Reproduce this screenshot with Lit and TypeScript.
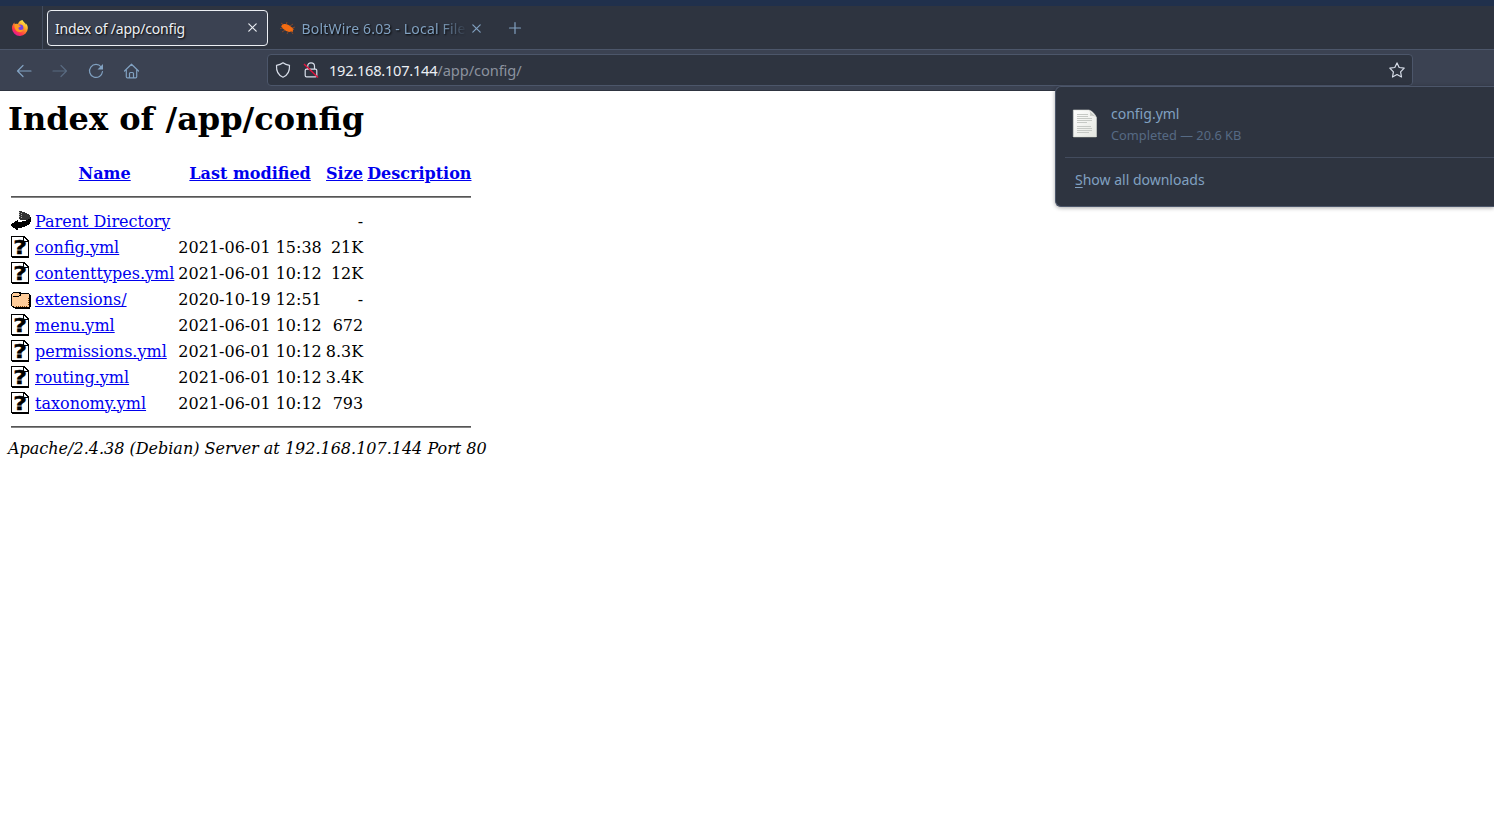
import { LitElement, html, css, svg, nothing } from "lit";
import { customElement } from "lit/decorators.js";

type Kind = "back" | "unknown" | "folder";
interface Entry { kind: Kind; name: string; date: string; size: string; }

const entries: Entry[] = [
  { kind: "back", name: "Parent Directory", date: "", size: "-" },
  { kind: "unknown", name: "config.yml", date: "2021-06-01 15:38", size: "21K" },
  { kind: "unknown", name: "contenttypes.yml", date: "2021-06-01 10:12", size: "12K" },
  { kind: "folder", name: "extensions/", date: "2020-10-19 12:51", size: "-" },
  { kind: "unknown", name: "menu.yml", date: "2021-06-01 10:12", size: "672" },
  { kind: "unknown", name: "permissions.yml", date: "2021-06-01 10:12", size: "8.3K" },
  { kind: "unknown", name: "routing.yml", date: "2021-06-01 10:12", size: "3.4K" },
  { kind: "unknown", name: "taxonomy.yml", date: "2021-06-01 10:12", size: "793" },
];

const art = {
  back: svg`
    <path fill="#333" d="M8 1h3v1h3v1h2v1h2v1h1v2h1v2h-2v1H9V9H8z"/>
    <path fill="#aaa" d="M8 2h1v1H8zM8 4h1v1H8zM8 6h1v1H8zM10 3h1v1h-1zM10 5h1v1h-1zM10 7h1v1h-1z"/>
    <path fill="#000" d="M0 14h1v-1h2v-1h1v-1h2v-1h1v2h4v-1h4v-1h2V9h2V7h1v5h-1v2h-1v1h-2v1h-2v1h-3v1H7v2H5v-1H4v-1H2v-1H1v-1H0z"/>`,
  unknown: svg`
    <path fill="#000" d="M0 0h13l5 5v17H1v-1H0z"/>
    <path fill="#fff" d="M1 1h11v5h5v14H1z"/>
    <path fill="#fff" d="M13 2l3 3h-3z"/>
    <text class="mark" x="0" y="0" transform="translate(2.200 17.500) scale(1.250 1)">?</text>`,
  folder: svg`
    <path fill="#000" d="M2 4h7l1 1h8l1 2h1v12h-1v2H4l-1-1H2l-2-2V6z"/>
    <path fill="#ffcc99" d="M2 5h6v1H2zM10 6h8v2h-8zM1 8h17v10l-1 1H3l-1-1H1zM1 6h8v2H1z"/>
    <path fill="#000" d="M2 8h6v1H2zM8 7h1v1H8zM9 6h1v1H9z"/>
    <path fill="none" stroke="#804000" stroke-dasharray="1 1" d="M5 18.500h11M17.500 17V9"/>`,
};

const icon = (k: Kind | null) =>
  html`<svg class="file" width="20" height="22" viewBox="0 0 20 22" shape-rendering="crispEdges">${k ? art[k] : nothing}</svg>`;

@customElement("browser-toolbar")
export class BrowserToolbar extends LitElement {
  static styles = css`
    :host { display: block; font-family: "Noto Sans", sans-serif; font-size: 14px; color: #81a1c1; }
    svg { display: block; flex: none; overflow: visible; }
    .line { fill: none; stroke: currentColor; stroke-linecap: round; stroke-linejoin: round; stroke-width: 1.2; }
    .strip { height: 6px; background: #20304c; }
    .tabs { height: 43px; display: flex; align-items: center; background: #2e3440; border-bottom: 1px solid #4c566a; }
    .brand { height: 43px; box-sizing: border-box; padding-left: 11px; border-right: 1px solid #434c5e; display: flex; align-items: center; width: 43px; }
    .tab { box-sizing: border-box; height: 36px; display: flex; align-items: center; text-shadow: 1px 1px 2px #000; }
    .active { margin-left: 4px; width: 221px; padding: 0 10.500px 0 7px; border: 1px solid #eceff4; border-radius: 4px; background: #3b4252; color: #eceff4; justify-content: space-between; }
    .second { width: 225px; padding: 1px 11px 0 12px; }
    .title { white-space: nowrap; padding-top: 2px; letter-spacing: -.2px; }
    .fade { width: 168px; margin-left: 5.500px; margin-right: 2.500px; padding-top: 1px; letter-spacing: .18px; overflow: hidden; line-height: 30px; -webkit-mask-image: linear-gradient(90deg, #000 82%, transparent 98%); mask-image: linear-gradient(90deg, #000 82%, transparent 98%); }
    .plus { margin: 1px 0 0 16px; }
    .nav { height: 41px; box-sizing: border-box; background: #3b4252; border-bottom: 1px solid #2e3440; display: flex; align-items: flex-start; padding: 4px 0 0 16px; }
    .buttons { display: flex; gap: 20px; align-items: center; height: 33px; width: 251px; }
    .disabled { opacity: .42; }
    .address { box-sizing: border-box; width: 1146px; height: 32px; border: 1px solid #4c566a; border-radius: 4px; background: #2e3440; color: #d8dee9; display: flex; align-items: center; padding: 0 7px; }
    .lock { margin-left: 12px; }
    .url { margin-left: 10px; flex: 1; font-size: 14.67px; letter-spacing: -.27px; color: #eceff4; white-space: nowrap; }
    .path { color: #8b929e; letter-spacing: -.1px; }
  `;
  render() {
    return html`
      <div class="strip"></div>
      <div class="tabs">
        <div class="brand">
          <svg width="18" height="18" viewBox="0 0 18 18">
            <defs>
              <linearGradient id="flame" x1=".85" y1=".1" x2=".25" y2=".95"><stop offset="0" stop-color="#fff04a"/><stop offset=".4" stop-color="#ff9a22"/><stop offset=".75" stop-color="#ff3b47"/><stop offset="1" stop-color="#e4159a"/></linearGradient>
            </defs>
            <path fill="url(#flame)" d="M11.500 1c.3 1.300 1.500 2 2.300 2.900.7.700 1.200 1.500 1.300 2.300 0-.7 0-1.300-.3-2 1.500 1.500 2.200 3.500 2 5.400A7.800 7.800 0 0 1 9 17 7.800 7.800 0 0 1 1 9.300C.9 6.700 2 4.800 3.300 3.400L3.700 5.200C4.800 4.600 6 4.700 7 5c.6-2 2.300-3.700 4.500-4z"/>
            <circle cx="9" cy="9" r="3.400" fill="#7542e5"/>
            <path fill="#ff9a22" d="M3.500 5.500C5 4.700 7 5 8 6.200L10 7C9.800 8 8 8 7.500 8.700c-.3 1.300.6 2.300 2 2.200 1.200 0 2-.6 3-.3-.8 2-2.500 2.800-4.500 2.500C5 12.600 3 9.500 3.500 5.500z"/>
          </svg>
        </div>
        <div class="tab active">
          <span class="title">Index of /app/config</span>
          <svg width="9" height="9" viewBox="0 0 9 9"><path class="line" d="M.8.8l7.400 7.400M8.200.8L.8 8.200"/></svg>
        </div>
        <div class="tab second">
          <svg width="16" height="16" viewBox="0 0 16 16">
            <path fill="#f36c12" d="M2.500 4.500c2-.8 5-.3 7.300 1.300l1.500 1.300 3 2.500-1.500 0 .3 2.200-2-.3-2 .4-3-1-3-2.200-2-2.500z"/>
            <path fill="none" stroke="#b8511a" stroke-width=".6" d="M4 5L1 3M6 5l1-3M3 8L0 8.500M5 10l-3 2M8 12l-1 2M10 6l3-2M12 8l3-1M11 11l2 3"/>
          </svg>
          <span class="title fade">BoltWire 6.03 - Local File</span>
          <svg width="9" height="9" viewBox="0 0 9 9"><path class="line" d="M.8.8l7.400 7.400M8.200.8L.8 8.200"/></svg>
        </div>
        <svg class="plus" width="12" height="12" viewBox="0 0 12 12"><path class="line" d="M6 .5v11M.5 6h11"/></svg>
      </div>
      <div class="nav">
        <div class="buttons">
          <svg width="16" height="16" viewBox="0 0 16 16"><path class="line" d="M15 8H1.500M7 2.500L1.500 8 7 13.500"/></svg>
          <svg class="disabled" width="16" height="16" viewBox="0 0 16 16"><path class="line" d="M1 8h13.500M9 2.500L14.500 8 9 13.500"/></svg>
          <svg width="16" height="16" viewBox="0 0 16 16"><path class="line" d="M13.200 4A6.500 6.500 0 1 0 14.500 8.500"/><path fill="currentColor" d="M15 1v5.500H9.500z"/></svg>
          <svg width="16" height="16" viewBox="0 0 16 16"><path class="line" d="M.5 8l7-6.800L14.500 8M2.300 6.500v7.200c0 .7.400 1.100 1.100 1.100h8.200c.7 0 1.100-.4 1.100-1.100V6.500M5.500 14.500V10.500c0-.7.400-1 1-1h2c.6 0 1 .3 1 1v4"/></svg>
        </div>
        <div class="address">
          <svg width="16" height="16" viewBox="0 0 16 16"><path class="line" stroke-width="1.400" d="M8 .8c2 1.600 4 2.200 6.500 2.500C14.800 9 12.500 13.500 8 15.200 3.500 13.500 1.200 9 1.500 3.300 4 3 6 2.400 8 .8z"/></svg>
          <svg class="lock" width="16" height="16" viewBox="0 0 16 16"><path class="line" d="M4.700 6.500V4.200C4.700 2 6 .8 8 .8s3.500 1.400 3.500 3.400v2.300M3.500 7.200h9c.8 0 1.300.5 1.300 1.300v5c0 .8-.5 1.300-1.300 1.300h-9c-.8 0-1.300-.5-1.300-1.300v-5c0-.8.5-1.300 1.300-1.300z"/><path fill="none" stroke="#e2143e" stroke-width="1.400" d="M1 2l14 13.500"/></svg>
          <span class="url">192.168.107.144<span class="path">/app/config/</span></span>
          <svg width="16" height="16" viewBox="0 0 16 16"><path class="line" d="M8 .9l2.200 4.600 5 .7-3.600 3.600.9 5.200L8 12.500 3.500 15l.9-5.200L.8 6.200l5-.7z"/></svg>
        </div>
      </div>`;
  }
}

@customElement("downloads-panel")
export class DownloadsPanel extends LitElement {
  static styles = css`
    :host { display: block; box-sizing: border-box; height: 121px; background: #2e3440; border: 1px solid #4c566a; border-right: 0; border-radius: 6px 0 0 6px; color: #81a1c1; font: 14px/20px "Noto Sans", sans-serif; padding-left: 9px; box-shadow: 0 1px 4px #0005; }
    .item { display: flex; align-items: center; height: 69px; padding: 0 0 1px 5px; border-bottom: 1px solid #434c5e; }
    .texts { margin-left: 9px; padding-top: 6px; }
    .status { font-size: 12.8px; line-height: 22px; color: #566a84; }
    .doc { margin: 5px 1px 0 -1px; }
    .all { padding: 12px 0 0 10px; }
    .key { text-decoration: underline; text-underline-offset: 2px; }
  `;
  render() {
    return html`
      <div class="item">
        <svg class="doc" width="32" height="32" viewBox="0 0 32 32">
          <defs><linearGradient id="paper" x1="0" y1="0" x2="1" y2="1"><stop offset="0" stop-color="#fff"/><stop offset="1" stop-color="#e4e6e0"/></linearGradient></defs>
          <path fill="#20252e" d="M3 29h25v1H3z"/>
          <path fill="url(#paper)" stroke="#d4d6d2" stroke-width=".6" d="M4.300 2H20c3 1 6 4 7.500 7.500V29H4.300z"/>
          <path fill="#c7cac4" d="M19.500 2c2 1.500 2 4 1.500 6 2.500-.8 5 0 6.500 1.500z"/>
          <path stroke="#c6c9c5" stroke-width="1" d="M8 6.500h11M8 8.500h11M8 10.500h15M8 12.500h15M8 14.500h10M8 18.500h14M8 20.500h15M8 22.500h15M8 24.500h12"/>
        </svg>
        <div class="texts"><div>config.yml</div><div class="status">Completed — 20.6 KB</div></div>
      </div>
      <div class="all"><span class="key">S</span>how all downloads</div>`;
  }
}

@customElement("directory-index")
export class DirectoryIndex extends LitElement {
  static styles = css`
    :host { display: block; padding: 8px; font-family: "DejaVu Serif", serif; font-size: 16px; color: #000; }
    h1 { margin: 0 0 21px; padding-top: 1px; font-size: 32px; line-height: 38px; }
    table { border-spacing: 2px; border-collapse: separate; line-height: 19px; }
    th, td { padding: 1px; white-space: nowrap; }
    .iconcell { vertical-align: top; }
    .file { display: block; }
    .mark { font: bold 19px "DejaVu Sans", sans-serif; stroke: #000; stroke-width: .4px; }
    .link { color: #0000ee; text-decoration: underline; }
    .num { text-align: right; }
    hr { margin: 8px 0; height: 2px; border: 0; background: linear-gradient(#555 50%, #858585 50%); }
    .server { font-style: italic; line-height: 19px; }
  `;
  render() {
    return html`
      <h1>Index of /app/config</h1>
      <table>
        <tr>
          <th class="iconcell">${icon(null)}</th>
          <th><a class="link">Name</a></th><th><a class="link">Last modified</a></th>
          <th><a class="link">Size</a></th><th><a class="link">Description</a></th>
        </tr>
        <tr><th colspan="5"><hr></th></tr>
        ${entries.map((e) => html`<tr>
          <td class="iconcell">${icon(e.kind)}</td>
          <td><a class="link">${e.name}</a></td>
          <td class="num">${e.date}</td><td class="num">${e.size}</td><td></td>
        </tr>`)}
        <tr><th colspan="5"><hr></th></tr>
      </table>
      <div class="server">Apache/2.4.38 (Debian) Server at 192.168.107.144 Port 80</div>`;
  }
}

@customElement("app-root")
export class AppRoot extends LitElement {
  static styles = css`
    :host { display: block; position: relative; height: 815px; overflow: hidden; background: #fff; }
    .downloads { position: absolute; top: 86px; right: 0; width: 439px; }
  `;
  render() {
    return html`<browser-toolbar></browser-toolbar><directory-index></directory-index><downloads-panel class="downloads"></downloads-panel>`;
  }
}
